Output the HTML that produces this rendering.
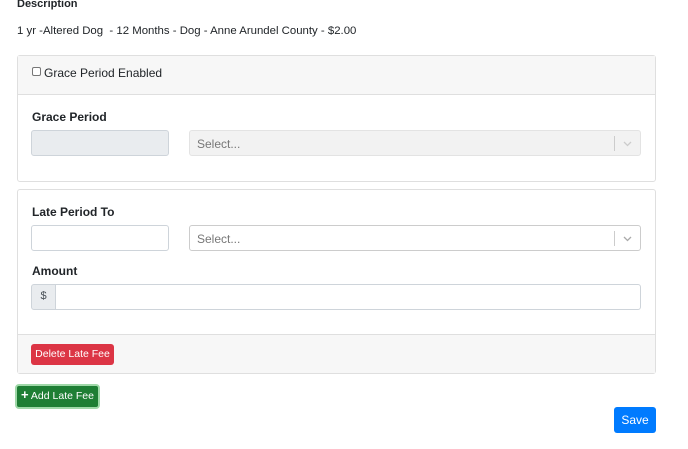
<!DOCTYPE html>
<html><head><style>
*{box-sizing:border-box;margin:0;padding:0}
body{width:688px;height:449px;background:#fff;font-family:"Liberation Sans",sans-serif;color:#212529;position:relative;overflow:hidden;font-size:12px}
.a{position:absolute}
.b{font-weight:bold}
.card{position:absolute;left:17px;width:639px;border:1px solid #dfdfdf;border-radius:3px;background:#fff}
.inp{position:absolute;border:1px solid #ced4da;border-radius:3px;background:#fff}
.sel{position:absolute;border:1px solid #ccc;border-radius:3px;background:#fff;color:#777;padding:6px 7px;font-size:12px}
.sel .d{position:absolute;right:25px;top:5px;width:1px;height:15px;background:#ccc}
.sel svg{position:absolute;right:7px;top:7px}
.btn{position:absolute;color:#fff;border-radius:3px;font-size:10.5px;text-align:center}
</style></head><body>
<div class="a b" style="left:17px;top:-2px;font-size:11px">Description</div>
<div class="a" style="left:17px;top:25px;font-size:11.4px">1 yr -Altered Dog &nbsp;- 12 Months - Dog - Anne Arundel County - $2.00</div>

<div class="card" style="top:55px;height:127px">
 <div style="height:39px;background:#f7f7f7;border-bottom:1px solid #dfdfdf;position:relative">
  <div class="a" style="left:14px;top:11px;width:9px;height:9px;border:1px solid #777;border-radius:2px;background:#fff"></div>
  <div class="a" style="left:26px;top:10px">Grace Period Enabled</div>
 </div>
 <div class="a b" style="left:14px;top:54px">Grace Period</div>
 <div class="inp" style="left:13px;top:74px;width:138px;height:26px;background:#e9ecef"></div>
 <div class="sel" style="left:171px;top:74px;width:452px;height:26px;background:#f2f2f2;border-color:#e3e3e3">Select...<div class="d"></div><svg width="11" height="11" viewBox="0 0 11 11"><path d="M2 4l3.5 3.5L9 4" stroke="#ccc" stroke-width="1.3" fill="none"/></svg></div>
</div>

<div class="card" style="top:189px;height:185px">
 <div class="a b" style="left:14px;top:15px">Late Period To</div>
 <div class="inp" style="left:13px;top:35px;width:138px;height:26px"></div>
 <div class="sel" style="left:171px;top:35px;width:452px;height:26px">Select...<div class="d"></div><svg width="11" height="11" viewBox="0 0 11 11"><path d="M2 4l3.5 3.5L9 4" stroke="#aaa" stroke-width="1.3" fill="none"/></svg></div>
 <div class="a b" style="left:14px;top:74px">Amount</div>
 <div class="inp" style="left:13px;top:94px;width:25px;height:26px;background:#e9ecef;border-radius:3px 0 0 3px;text-align:center;padding-top:5px;font-size:11px;color:#495057">$</div>
 <div class="inp" style="left:37px;top:94px;width:586px;height:26px;border-radius:0 3px 3px 0"></div>
 <div class="a" style="left:0;top:144px;width:637px;height:39px;background:#f7f7f7;border-top:1px solid #dfdfdf"></div>
 <div class="btn" style="left:13px;top:154px;width:83px;height:21px;background:#dc3545;padding-top:4px">Delete Late Fee</div>
</div>

<div class="btn" style="left:15px;top:384px;width:85px;height:25px;border:2px solid #9fd8a8;border-radius:4px;background:#1e7e34;padding-top:4px"><b style="font-size:13px;line-height:10px">+</b> Add Late Fee</div>
<div class="btn" style="left:614px;top:407px;width:42px;height:26px;background:#007bff;font-size:12px;padding-top:6px">Save</div>
</body></html>
